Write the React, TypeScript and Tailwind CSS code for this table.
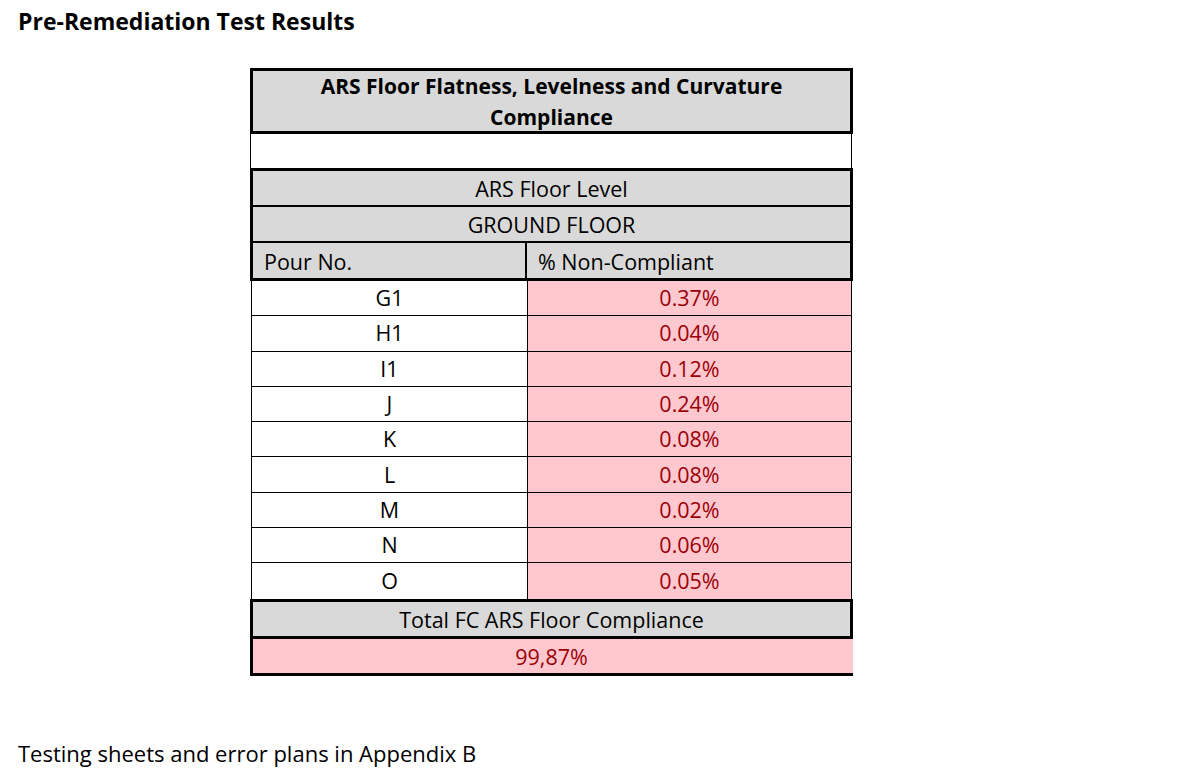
const rows = [
    { pour: 'G1', pct: '0.37%' },
    { pour: 'H1', pct: '0.04%' },
    { pour: 'I1', pct: '0.12%' },
    { pour: 'J', pct: '0.24%' },
    { pour: 'K', pct: '0.08%' },
    { pour: 'L', pct: '0.08%' },
    { pour: 'M', pct: '0.02%' },
    { pour: 'N', pct: '0.06%' },
    { pour: 'O', pct: '0.05%' },
];

export default function App() {
    return (
        <div
            className="w-[1186px] h-[776px] bg-white text-black overflow-hidden"
            style={{ fontFamily: '"Open Sans", "Liberation Sans", sans-serif' }}
        >
            <div className="pl-[18px] pt-[7px] h-[34px] text-[23px] leading-[28px] font-bold">
                Pre-Remediation Test Results
            </div>

            <div className="ml-[250px] mt-[34px] w-[603px] text-[21.5px] leading-[28px]">
                {/* title block */}
                <div className="h-[66px] border-[3px] border-black bg-[#d9d9d9] font-bold text-[21px] flex flex-col items-center justify-center leading-[31px] pt-[1px]">
                    <span>ARS Floor Flatness, Levelness and Curvature</span>
                    <span>Compliance</span>
                </div>

                {/* spacer row */}
                <div className="h-[34px] border-x border-black mr-[1px]" />

                {/* level / floor / column headers */}
                <div className="border-[3px] border-black bg-[#d9d9d9]">
                    <div className="h-[36px] border-b-2 border-black flex items-center justify-center pt-[2px]">
                        ARS Floor Level
                    </div>
                    <div className="h-[36px] border-b-2 border-black flex items-center justify-center pt-[2px]">
                        GROUND FLOOR
                    </div>
                    <div className="h-[35px] flex">
                        <div className="w-[274px] border-r-2 border-black flex items-center pl-[11px] pt-[2px]">
                            Pour No.
                        </div>
                        <div className="flex-1 flex items-center pl-[11px] pt-[2px]">% Non-Compliant</div>
                    </div>
                </div>

                {/* data rows */}
                <div className="border-l border-r border-black ml-[1px] mr-[1px]">
                    {rows.map((r, i) => (
                        <div
                            key={r.pour}
                            className={`h-[35.3px] flex ${i < rows.length - 1 ? 'border-b border-black' : ''}`}
                        >
                            <div className="w-[276px] border-r border-black flex items-center justify-center">
                                {r.pour}
                            </div>
                            <div className="flex-1 bg-[#ffc7ce] text-[#9c0006] flex items-center justify-center">
                                {r.pct}
                            </div>
                        </div>
                    ))}
                </div>

                {/* totals */}
                <div className="h-[40px] border-[3px] border-black bg-[#d9d9d9] flex items-center justify-center pt-[2px]">
                    Total FC ARS Floor Compliance
                </div>
                <div className="h-[37px] border-l-[3px] border-b-[3px] border-black bg-[#ffc7ce] text-[#9c0006] flex items-center justify-center pr-[3px] pt-[2px]">
                    99,87%
                </div>
            </div>

            <div className="pl-[18px] mt-[63px] text-[22px] leading-[28px]">
                Testing sheets and error plans in Appendix B
            </div>
        </div>
    );
}
